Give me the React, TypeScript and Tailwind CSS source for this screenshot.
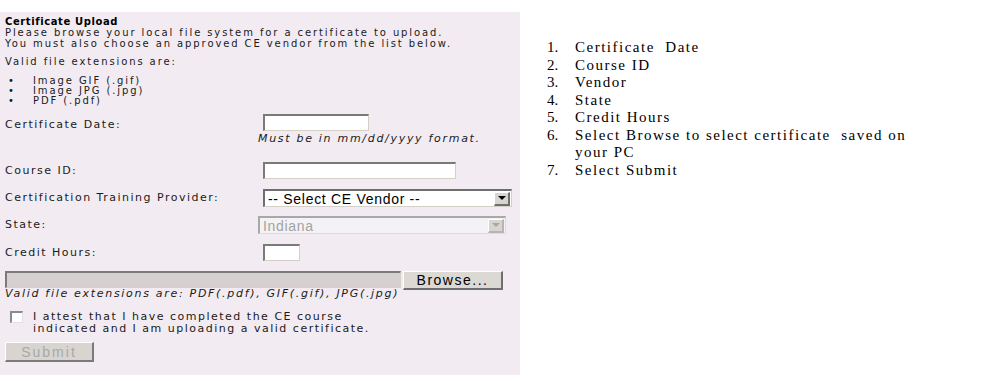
import React from 'react';

const Inset = ({ className = '' }: { className?: string }) => (
  <div
    className={`h-[17px] bg-white border-t-2 border-l-2 border-b border-r border-t-[#7a7a7a] border-l-[#7a7a7a] border-b-[#d4d0c8] border-r-[#d4d0c8] ${className}`}
  />
);

const SelectBox = ({ text, disabled = false, className = '' }: { text: string; disabled?: boolean; className?: string }) => (
  <div
    className={`flex items-center h-[18px] border-t-2 border-l-2 border-b border-r ${
      disabled
        ? 'bg-[#f4f2f4] border-t-[#a8a8a8] border-l-[#a8a8a8] border-b-[#dcdcdc] border-r-[#dcdcdc]'
        : 'bg-white border-t-[#6e6e6e] border-l-[#6e6e6e] border-b-[#d4d0c8] border-r-[#d4d0c8]'
    } ${className}`}
  >
    <span
      className={`flex-1 pl-[3px] text-[14px] leading-none tracking-[0.7px] font-['Liberation_Sans',sans-serif] ${
        disabled ? 'text-[#a3a3a3]' : 'text-black'
      }`}
    >
      {text}
    </span>
    <span
      className={`flex items-center justify-center w-[16px] h-[14px] mr-[1px] bg-[#d8d4d0] border-t border-l border-white border-b-2 border-r-2 ${
        disabled ? 'border-b-[#b5b5b5] border-r-[#b5b5b5]' : 'border-b-[#6e6e6e] border-r-[#6e6e6e]'
      }`}
    >
      <span
        className={`w-0 h-0 border-l-[4px] border-r-[4px] border-t-[4px] border-l-transparent border-r-transparent ${
          disabled ? 'border-t-[#a8a8a8]' : 'border-t-black'
        }`}
      />
    </span>
  </div>
);

const Row = ({
  label,
  children,
  className = '',
  labelPad = 'pt-[3px]',
}: {
  label: string;
  children: React.ReactNode;
  className?: string;
  labelPad?: string;
}) => (
  <div className={`flex items-start ${className}`}>
    <div className={`w-[258px] shrink-0 pl-[5px] ${labelPad}`}>{label}</div>
    <div>{children}</div>
  </div>
);

const steps = [
  'Certificate\u00a0 Date',
  'Course ID',
  'Vendor',
  'State',
  'Credit Hours',
  'Select Browse to select certificate\u00a0 saved on your PC',
  'Select Submit',
];

export default function App() {
  return (
    <div className="w-[995px] h-[381px] bg-white flex items-start overflow-hidden">
      <div className="mt-[12px] w-[520px] h-[363px] bg-[#f2ecf2] text-[11px] leading-[11px] tracking-[1.5px] text-[#1a1a1a] font-['DejaVu_Sans',Verdana,sans-serif]">
        <div className="pl-[5px] pt-[4px] text-[10px] tracking-[1.9px]">
          <div className="font-bold text-black tracking-[0.6px]">Certificate Upload</div>
          <div>Please browse your local file system for a certificate to upload.</div>
          <div>You must also choose an approved CE vendor from the list below.</div>
          <div className="mt-[7px]">Valid file extensions are:</div>
          <ul className="mt-[9px]">
            {['Image GIF (.gif)', 'Image JPG (.jpg)', 'PDF (.pdf)'].map((t) => (
              <li key={t} className="flex leading-[10px]">
                <span className="w-[28px] pl-[3px]">•</span>
                {t}
              </li>
            ))}
          </ul>
        </div>

        <Row label="Certificate Date:" className="mt-[8px]" labelPad="pt-[5px]">
          <Inset className="ml-[5px] w-[106px]" />
          <div className="mt-[2px] italic tracking-[1.7px]">Must be in mm/dd/yyyy format.</div>
        </Row>

        <Row label="Course ID:" className="mt-[18px]">
          <Inset className="ml-[5px] w-[193px]" />
        </Row>

        <Row label="Certification Training Provider:" className="mt-[10px]">
          <SelectBox text="-- Select CE Vendor --" className="ml-[5px] w-[249px]" />
        </Row>

        <Row label="State:" className="mt-[9px]">
          <SelectBox text="Indiana" disabled className="w-[248px]" />
        </Row>

        <Row label="Credit Hours:" className="mt-[10px]">
          <Inset className="ml-[5px] w-[37px]" />
        </Row>

        <div className="flex items-start mt-[10px] pl-[5px]">
          <div className="w-[396px] h-[17px] bg-[#d6d1d0] border-t-2 border-l-2 border-b border-r border-t-[#7a7a7a] border-l-[#7a7a7a] border-b-[#d4d0c8] border-r-[#d4d0c8]" />
          <div className="ml-[2px] w-[100px] h-[19px] bg-[#dcd8d4] border-t border-l border-white border-b-2 border-r-2 border-b-[#6e6e6e] border-r-[#6e6e6e] flex items-center justify-center text-[14px] leading-none tracking-[1.5px] font-['Liberation_Sans',sans-serif] text-black">
            Browse...
          </div>
        </div>
        <div className="-mt-[2px] pl-[5px] italic tracking-[1.7px]">
          Valid file extensions are: PDF(.pdf), GIF(.gif), JPG(.jpg)
        </div>

        <div className="flex items-start mt-[12px] pl-[10px]">
          <div className="w-[13px] h-[12px] bg-white border-t-2 border-l-2 border-t-[#8a8a8a] border-l-[#8a8a8a] border-b border-r border-b-[#e0e0e0] border-r-[#e0e0e0]" />
          <div className="ml-[10px] leading-[12px]">
            I attest that I have completed the CE course
            <br />
            indicated and I am uploading a valid certificate.
          </div>
        </div>

        <div className="mt-[7px] ml-[5px] w-[89px] h-[20px] bg-[#d8d4d0] border-t border-l border-white border-b-2 border-r-2 border-b-[#7a7a7a] border-r-[#7a7a7a] flex items-center justify-center text-[14px] leading-none tracking-[2px] font-['Liberation_Sans',sans-serif] text-[#a8a8a8]">
          Submit
        </div>
      </div>

      <ol className="mt-[39px] ml-[27px] font-['Liberation_Serif',serif] text-[15px] leading-[17.5px] tracking-[1.5px] text-black">
        {steps.map((s, i) => (
          <li key={i} className="flex">
            <span className="w-[28px] shrink-0 tracking-normal">{i + 1}.</span>
            <span className="w-[350px]">{s}</span>
          </li>
        ))}
      </ol>
    </div>
  );
}
